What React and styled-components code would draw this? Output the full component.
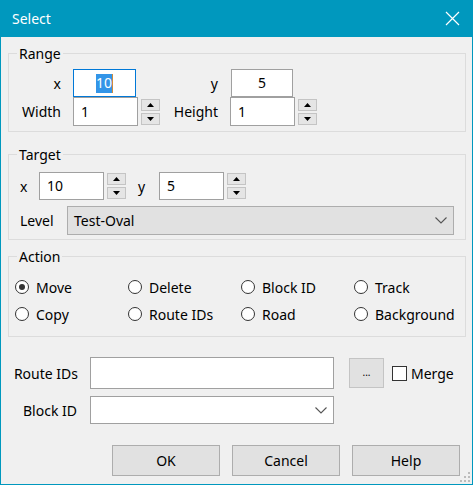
import React from "react"
import styled, { createGlobalStyle } from "styled-components"

const GlobalStyle = createGlobalStyle`
  html, body {
    margin: 0;
    padding: 0;
    background: #ffffff;
  }
  body {
    font: 14px "Noto Sans", "Liberation Sans", sans-serif;
    color: #000;
  }
`

const Window = styled.div`
  position: relative;
  width: 473px;
  height: 485px;
  box-sizing: border-box;
  border: 1px solid #0098be;
  border-top: 0;
  background: #f0f0f0;
  display: flex;
  flex-direction: column;
`

const TitleBar = styled.div`
  height: 37px;
  flex: none;
  background: #0098be;
  color: #fff;
  display: flex;
  align-items: center;
  justify-content: space-between;
  padding: 0 12px 0 11px;
  font-size: 14px;
`

const Body = styled.div`
  flex: 1;
  display: flex;
  flex-direction: column;
  padding: 7px 6px 0 7px;
`

const Group = styled.fieldset`
  margin: ${(p) => p.$top || 0}px 0 0 0;
  padding: 0;
  border: 1px solid #dcdcdc;
  min-width: 0;
`

const Legend = styled.legend`
  margin-left: 8px;
  padding: 0 2px;
  line-height: 19px;
`

const GroupContent = styled.div`
  padding: ${(p) => p.$pad};
  display: flex;
  flex-direction: column;
  gap: ${(p) => p.$gap || 0}px;
`

const Row = styled.div`
  display: flex;
  align-items: center;
  height: ${(p) => p.$h}px;
  margin-top: ${(p) => p.$mt || 0}px;
`

const Label = styled.div`
  width: ${(p) => p.$w}px;
  flex: none;
  box-sizing: border-box;
  text-align: ${(p) => p.$align || "left"};
  padding-right: ${(p) => p.$pr || 0}px;
  white-space: nowrap;
`

const TextBox = styled.div`
  width: ${(p) => p.$w}px;
  height: ${(p) => p.$h || 28}px;
  flex: none;
  box-sizing: border-box;
  background: #fff;
  border: 1px solid ${(p) => (p.$focus ? "#0078d7" : "#a0a0a0")};
  display: flex;
  align-items: center;
  justify-content: ${(p) => (p.$center ? "center" : "flex-start")};
  padding-left: ${(p) => (p.$center ? 0 : 7)}px;
  line-height: 1;
`

const Selected = styled.span`
  background: #3395e8;
  color: #fff;
  padding: 2px 0 3px;
  border-right: 1px solid #d08a3a;
`

const SpinBox = styled.div`
  flex: none;
  width: 19px;
  margin-left: 3px;
  display: flex;
  flex-direction: column;
  gap: 2px;
`

const SpinButton = styled.div`
  height: 12px;
  box-sizing: border-box;
  background: #e5e5e5;
  border: 1px solid #c4c4c4;
  display: flex;
  align-items: center;
  justify-content: center;
`

const Combo = styled.div`
  width: ${(p) => p.$w}px;
  height: ${(p) => p.$h}px;
  flex: none;
  box-sizing: border-box;
  background: ${(p) => (p.$flat ? "#e1e1e1" : "#fff")};
  border: 1px solid ${(p) => (p.$flat ? "#adadad" : "#a0a0a0")};
  display: flex;
  align-items: center;
  justify-content: space-between;
  padding: 0 6px 0 6px;
`

const RadioGrid = styled.div`
  display: grid;
  grid-template-columns: repeat(4, 113px);
  row-gap: 5px;
`

const RadioItem = styled.div`
  display: flex;
  align-items: center;
  height: 22px;
  gap: 7px;
`

const RadioCircle = styled.span`
  width: 14px;
  height: 14px;
  box-sizing: border-box;
  border-radius: 50%;
  border: 1px solid #333;
  background: #fff;
  display: flex;
  align-items: center;
  justify-content: center;
  &::after {
    content: "";
    width: 6px;
    height: 6px;
    border-radius: 50%;
    background: ${(p) => (p.$on ? "#333" : "transparent")};
  }
`

const Lower = styled.div`
  margin-top: 20px;
  display: flex;
  flex-direction: column;
`

const SmallButton = styled.div`
  width: 35px;
  height: 30px;
  box-sizing: border-box;
  margin-left: 15px;
  background: #e1e1e1;
  border: 1px solid #c4c4c4;
  display: flex;
  align-items: center;
  justify-content: center;
  font-size: 10px;
  padding-bottom: 2px;
`

const Check = styled.div`
  display: flex;
  align-items: center;
  margin-left: 8px;
  gap: 4px;
`

const CheckBoxSquare = styled.span`
  width: 15px;
  height: 15px;
  box-sizing: border-box;
  border: 1px solid #333;
  background: #fff;
`

const ButtonBar = styled.div`
  display: flex;
  justify-content: flex-end;
  gap: 12px;
  margin-top: 21px;
  padding-right: 6px;
`

const Button = styled.div`
  width: 108px;
  height: 31px;
  box-sizing: border-box;
  background: #e1e1e1;
  border: 1px solid #adadad;
  display: flex;
  align-items: center;
  justify-content: center;
`

const Grip = styled.svg`
  position: absolute;
  right: 2px;
  bottom: 2px;
`

const Arrow = ({ up }) => (
  <svg width="7" height="4" viewBox="0 0 7 4">
    <path d={up ? "M0 4 L3.5 0 L7 4 Z" : "M0 0 L3.5 4 L7 0 Z"} fill="#000" />
  </svg>
)

const Spinner = () => (
  <SpinBox>
    <SpinButton>
      <Arrow up />
    </SpinButton>
    <SpinButton>
      <Arrow />
    </SpinButton>
  </SpinBox>
)

const Chevron = () => (
  <svg width="12" height="7" viewBox="0 0 12 7">
    <path d="M0.5 0.5 L6 6 L11.5 0.5" fill="none" stroke="#555" strokeWidth="1.1" />
  </svg>
)

const Radio = ({ on, children }) => (
  <RadioItem>
    <RadioCircle $on={on} />
    {children}
  </RadioItem>
)

const actions = [
  ["Move", true],
  ["Delete"],
  ["Block ID"],
  ["Track"],
  ["Copy"],
  ["Route IDs"],
  ["Road"],
  ["Background"],
]

export default function App() {
  return (
    <>
      <GlobalStyle />
      <Window>
        <TitleBar>
          <span>Select</span>
          <svg width="15" height="15" viewBox="0 0 15 15">
            <path d="M1 1 L14 14 M14 1 L1 14" stroke="#fff" strokeWidth="1.2" />
          </svg>
        </TitleBar>
        <Body>
          <Group>
            <Legend>Range</Legend>
            <GroupContent $pad="6px 0 5px 11px">
              <Row $h={28}>
                <Label $w={53} $align="right" $pr={12}>x</Label>
                <TextBox $w={63} $center $focus>
                  <Selected>10</Selected>
                </TextBox>
                <Label $w={95} $align="right" $pr={13}>y</Label>
                <TextBox $w={62} $center>5</TextBox>
              </Row>
              <Row $h={29}>
                <Label $w={53} $align="right" $pr={12}>Width</Label>
                <TextBox $w={65} $h={29}>1</TextBox>
                <Spinner />
                <Label $w={70} $align="right" $pr={12}>Height</Label>
                <TextBox $w={65} $h={29}>1</TextBox>
                <Spinner />
              </Row>
            </GroupContent>
          </Group>

          <Group $top={13}>
            <Legend>Target</Legend>
            <GroupContent $pad="8px 0 4px 11px">
              <Row $h={28}>
                <Label $w={19}>x</Label>
                <TextBox $w={65}>10</TextBox>
                <Spinner />
                <Label $w={12} />
                <Label $w={21}>y</Label>
                <TextBox $w={65}>5</TextBox>
                <Spinner />
              </Row>
              <Row $h={29} $mt={6}>
                <Label $w={47}>Level</Label>
                <Combo $w={387} $h={29} $flat>
                  <span>Test-Oval</span>
                  <Chevron />
                </Combo>
              </Row>
            </GroupContent>
          </Group>

          <Group $top={7}>
            <Legend>Action</Legend>
            <GroupContent $pad="10px 0 11px 6px">
              <RadioGrid>
                {actions.map(([name, on]) => (
                  <Radio key={name} on={on}>
                    {name}
                  </Radio>
                ))}
              </RadioGrid>
            </GroupContent>
          </Group>

          <Lower>
            <Row $h={32}>
              <Label $w={82} $align="right" $pr={12}>Route IDs</Label>
              <TextBox $w={244} $h={32} />
              <SmallButton>...</SmallButton>
              <Check>
                <CheckBoxSquare />
                Merge
              </Check>
            </Row>
            <Row $h={28} $mt={7}>
              <Label $w={82} $align="right" $pr={13}>Block ID</Label>
              <Combo $w={244} $h={28}>
                <span />
                <Chevron />
              </Combo>
            </Row>
          </Lower>

          <ButtonBar>
            <Button>OK</Button>
            <Button>Cancel</Button>
            <Button>Help</Button>
          </ButtonBar>
        </Body>
        <Grip width="10" height="10" viewBox="0 0 10 10">
          {[
            [8, 0],
            [8, 4],
            [8, 8],
            [4, 4],
            [4, 8],
            [0, 8],
          ].map(([x, y]) => (
            <rect key={x + "-" + y} x={x} y={y} width="2" height="2" fill="#bcbcbc" />
          ))}
        </Grip>
      </Window>
    </>
  )
}
